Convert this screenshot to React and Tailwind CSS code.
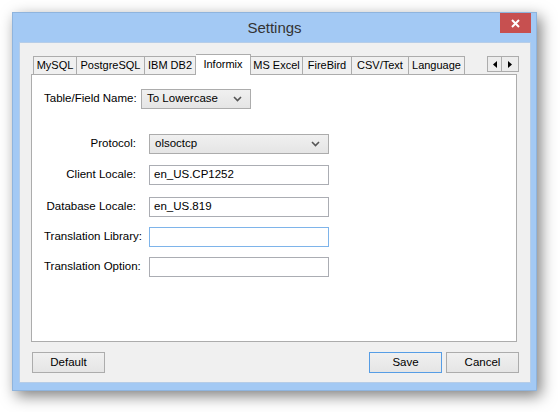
import React from "react";

const font = { fontFamily: '"Liberation Sans", Arial, sans-serif' };

function Chevron() {
  return (
    <svg width="9" height="6" viewBox="0 0 9 6" className="shrink-0">
      <path d="M1 1 L4.5 4.5 L8 1" fill="none" stroke="#555" strokeWidth="1.6" />
    </svg>
  );
}

function Select({ value, className }) {
  return (
    <div
      className={
        "flex items-center justify-between h-[20px] border border-[#acacac] bg-gradient-to-b from-[#f0f0f0] to-[#e5e5e5] pl-[5px] pr-[8px] text-[11.5px] text-black " +
        className
      }
    >
      <span>{value}</span>
      <Chevron />
    </div>
  );
}

function Input({ value, focus }) {
  return (
    <div
      className={
        "flex items-center h-[20px] w-[180px] bg-white pl-[4px] text-[11.5px] text-black border " +
        (focus ? "border-[#7eb4ea]" : "border-[#abadb3]")
      }
    >
      {value}
    </div>
  );
}

function Row({ label, children, mt }) {
  return (
    <div className={"flex items-center " + mt}>
      <div className="w-[105px] pr-[13px] text-right text-[11.5px] text-black whitespace-nowrap">
        {label}
      </div>
      {children}
    </div>
  );
}

const tabs = [
  ["MySQL", "w-[44px]"],
  ["PostgreSQL", "w-[68px]"],
  ["IBM DB2", "w-[51px]"],
  ["Informix", "w-[55px]"],
  ["MS Excel", "w-[52px]"],
  ["FireBird", "w-[49px]"],
  ["CSV/Text", "w-[57px]"],
  ["Language", "w-[56px]"],
];

function Button({ label, primary }) {
  return (
    <div
      className={
        "flex items-center justify-center w-[73px] h-[21px] bg-gradient-to-b from-[#f0f0f0] to-[#e5e5e5] text-[11.5px] text-black border " +
        (primary ? "border-[#569de5]" : "border-[#acacac]")
      }
    >
      {label}
    </div>
  );
}

export default function App() {
  return (
    <div className="w-[558px] h-[412px] bg-white pt-[12px] pl-[12px]" style={font}>
      <div className="relative w-[525px] h-[379px] bg-[#a3c9f4] border border-[#8fb4dd] shadow-[4px_5px_14px_rgba(0,0,0,0.5)] flex flex-col">
        <div className="h-[29px] flex items-center justify-center">
          <span className="text-[15px] text-[#333] mt-[2px]">Settings</span>
        </div>
        <div className="absolute top-0 right-[5px] w-[31px] h-[20px] bg-[#c75050] flex items-center justify-center">
          <svg width="9" height="9" viewBox="0 0 9 9">
            <path d="M1 1 L8 8 M8 1 L1 8" stroke="white" strokeWidth="2" />
          </svg>
        </div>
        <div className="ml-[6px] mr-[5px] h-[341px] bg-[#f0f0f0] border border-[#b6cde8] flex flex-col">
          <div className="ml-[11px] mt-[11px] w-[488px] h-[20px] flex">
            <div className="flex items-end pl-[2px]">
              {tabs.map(([t, w], i) => {
                const sel = t === "Informix";
                return (
                  <div
                    key={t}
                    className={
                      "flex items-center justify-center text-[11px] text-black border-t border-r border-[#acacac] whitespace-nowrap " +
                      w +
                      (i === 0 ? " border-l" : "") +
                      (sel
                        ? " h-[21px] bg-white relative z-10 -mb-[1px] pb-[2px]"
                        : " h-[18px] bg-[#f0f0f0]")
                    }
                  >
                    {t}
                  </div>
                );
              })}
            </div>
            <div className="flex-1" />
            <div className="flex mt-[2px] h-[16px]">
              <div className="w-[15px] h-[16px] border border-[#acacac] bg-[#ececec] flex items-center justify-center">
                <svg width="4" height="7" viewBox="0 0 4 7">
                  <path d="M4 0 L0 3.5 L4 7 Z" fill="black" />
                </svg>
              </div>
              <div className="w-[17px] h-[16px] border border-l-0 border-[#acacac] bg-[#ececec] flex items-center justify-center">
                <svg width="4" height="7" viewBox="0 0 4 7">
                  <path d="M0 0 L4 3.5 L0 7 Z" fill="black" />
                </svg>
              </div>
            </div>
          </div>
          <div className="ml-[11px] w-[486px] h-[268px] bg-white border border-[#acacac] flex flex-col">
            <div className="flex items-center mt-[14px] ml-[12px]">
              <span className="text-[11.5px] text-black w-[97px]">Table/Field Name:</span>
              <Select value="To Lowercase" className="w-[110px]" />
            </div>
            <div className="flex flex-col ml-[12px]">
              <Row label="Protocol:" mt="mt-[25px]">
                <Select value="olsoctcp" className="w-[180px]" />
              </Row>
              <Row label="Client Locale:" mt="mt-[11px]">
                <Input value="en_US.CP1252" />
              </Row>
              <Row label="Database Locale:" mt="mt-[12px]">
                <Input value="en_US.819" />
              </Row>
              <Row label="Translation Library:" mt="mt-[10px]">
                <Input value="" focus />
              </Row>
              <Row label="Translation Option:" mt="mt-[10px]">
                <Input value="" />
              </Row>
            </div>
          </div>
          <div className="flex items-center mt-[10px] ml-[12px] mr-[11px]">
            <Button label="Default" />
            <div className="flex-1" />
            <Button label="Save" primary />
            <div className="w-[4px]" />
            <Button label="Cancel" />
          </div>
        </div>
      </div>
    </div>
  );
}
